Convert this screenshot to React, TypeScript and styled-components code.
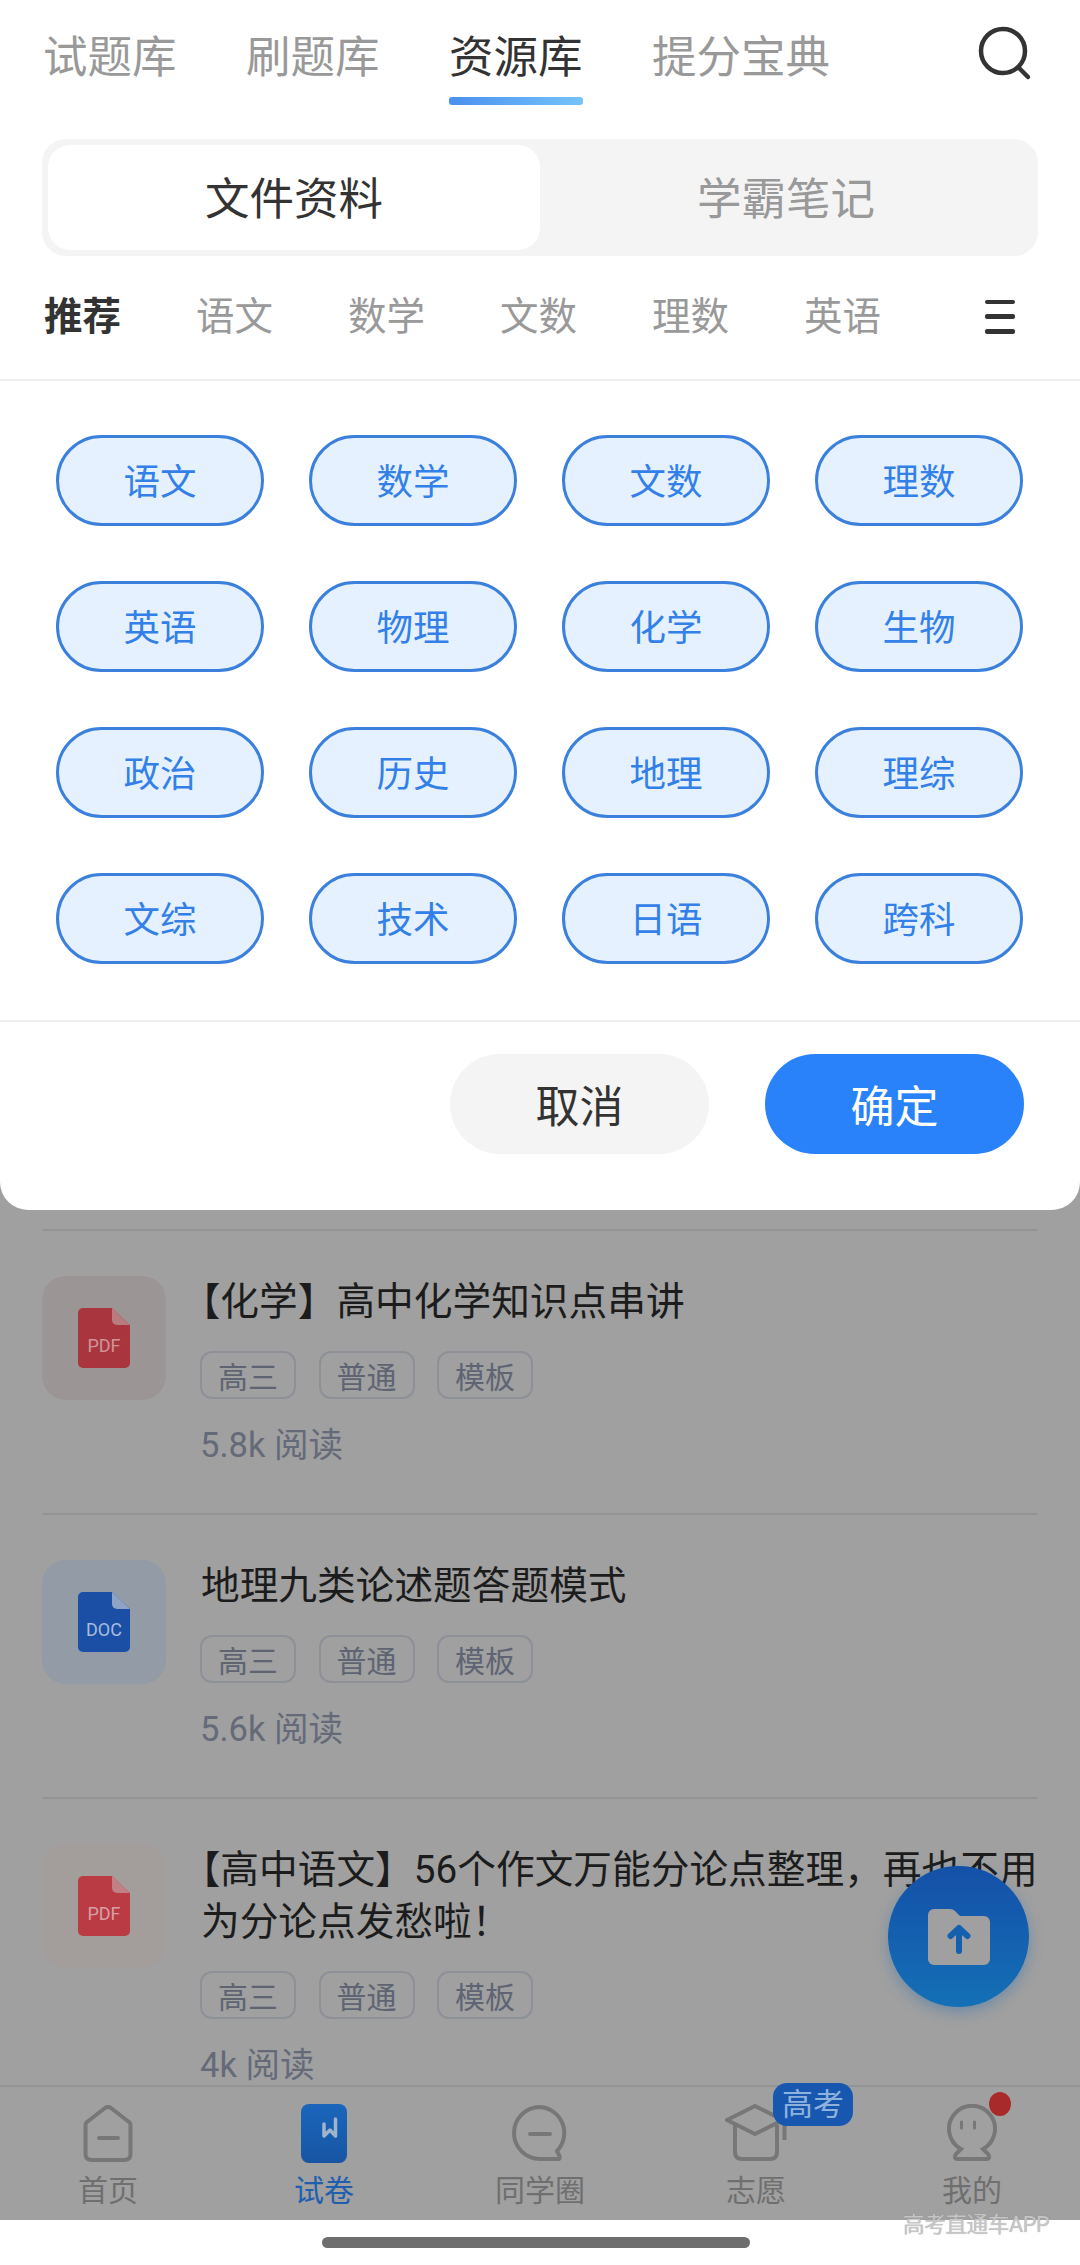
import React from "react";
import styled, { createGlobalStyle } from "styled-components";

const GlobalStyle = createGlobalStyle`
  html, body {
    margin: 0;
    padding: 0;
    background: #fff;
  }
  * {
    box-sizing: border-box;
  }
`;

const Page = styled.div`
  position: relative;
  width: 1080px;
  height: 2265px;
  overflow: hidden;
  display: flex;
  flex-direction: column;
  font-family: Roboto, "Noto Sans CJK SC", sans-serif;
`;

const Screen = styled.div`
  height: 2220px;
  display: flex;
  flex-direction: column;
  background: #a0a0a0;
`;

const Sheet = styled.div`
  height: 1210px;
  flex: none;
  background: #fff;
  border-radius: 0 0 28px 28px;
`;

const TopBar = styled.div`
  height: 139px;
  padding: 0 43px;
  display: flex;
  gap: 69.5px;
  position: relative;
`;

const TopTab = styled.div<{ $active?: boolean }>`
  position: relative;
  height: 105px;
  padding-top: 32px;
  font-size: 44.5px;
  line-height: 52px;
  white-space: nowrap;
  color: ${(p) => (p.$active ? "#333" : "#999")};

  &::after {
    content: "";
    display: ${(p) => (p.$active ? "block" : "none")};
    position: absolute;
    left: 0;
    right: 0;
    bottom: 0;
    height: 8px;
    border-radius: 3px;
    background: linear-gradient(90deg, #4a90ee, #74c3fb);
  }
`;

const SearchIcon = styled.svg`
  position: absolute;
  left: 976px;
  top: 25px;
  width: 56px;
  height: 56px;
`;

const Segment = styled.div`
  margin: 0 42px;
  height: 117px;
  padding: 6px;
  display: flex;
  border-radius: 24px;
  background: #f4f4f4;
`;

const SegmentItem = styled.div<{ $active?: boolean }>`
  width: 492px;
  padding-bottom: 5px;
  display: flex;
  align-items: center;
  justify-content: center;
  border-radius: 22px;
  font-size: 44.5px;
  color: ${(p) => (p.$active ? "#333" : "#999")};
  background: ${(p) => (p.$active ? "#fff" : "transparent")};
  & + & {
    flex: 1;
  }
`;

const SubjectRow = styled.div`
  height: 125px;
  padding: 0 0 2px 44px;
  display: flex;
  align-items: center;
  border-bottom: 2px solid #eeeeee;
`;

const SubjectTab = styled.div<{ $active?: boolean }>`
  width: 152px;
  font-size: 38.5px;
  line-height: 50px;
  font-weight: ${(p) => (p.$active ? 700 : 400)};
  color: ${(p) => (p.$active ? "#333" : "#999")};
`;

const MenuBars = styled.div`
  margin-left: 29px;
  width: 30px;
  height: 34px;
  display: flex;
  flex-direction: column;
  justify-content: space-between;

  span {
    height: 4.5px;
    border-radius: 2px;
    background: #333;
  }
`;

const PillGrid = styled.div`
  padding: 54px 57px 56px 56px;
  display: grid;
  grid-template-columns: repeat(4, 208px);
  justify-content: space-between;
  row-gap: 55px;
  border-bottom: 2px solid #eeeeee;
`;

const Pill = styled.div`
  height: 91px;
  padding-bottom: 2px;
  display: flex;
  align-items: center;
  justify-content: center;
  border: 3.5px solid #3a80dc;
  border-radius: 46px;
  background: #e6f1ff;
  font-size: 36.5px;
  color: #3381e8;
`;

const SheetFooter = styled.div`
  padding: 32px 56px 0 0;
  display: flex;
  justify-content: flex-end;
  gap: 56px;
`;

const FooterButton = styled.div<{ $primary?: boolean }>`
  width: 259px;
  height: 100px;
  display: flex;
  align-items: center;
  justify-content: center;
  border-radius: 50px;
  font-size: 44px;
  color: ${(p) => (p.$primary ? "#fff" : "#333")};
  background: ${(p) => (p.$primary ? "#2a82fb" : "#f4f4f4")};
`;

const Feed = styled.div`
  flex: 1;
  min-height: 0;
  overflow: hidden;
  padding: 19px 42px 0;
`;

const FeedItem = styled.div`
  padding: 45px 0 46px;
  display: flex;
  border-top: 2px solid #949494;
`;

const FileTile = styled.div<{ $bg: string }>`
  flex: none;
  width: 124px;
  height: 124px;
  margin-right: 35px;
  display: flex;
  align-items: center;
  justify-content: center;
  border-radius: 24px;
  background: ${(p) => p.$bg};
`;

const ItemBody = styled.div`
  flex: 1;
  min-width: 0;
  margin-right: -6px;
`;

const ItemTitle = styled.div`
  font-size: 38.7px;
  line-height: 52px;
  color: #1c1c1c;
  text-spacing-trim: trim-start;
`;

const TagRow = styled.div`
  margin-top: 23px;
  margin-left: -1px;
  display: flex;
  gap: 22.5px;
`;

const Tag = styled.div`
  width: 96px;
  height: 48px;
  display: flex;
  align-items: center;
  justify-content: center;
  border: 2.5px solid #8e9098;
  border-radius: 12px;
  font-size: 30px;
  color: #5f6472;
`;

const ReadCount = styled.div`
  margin-top: 24px;
  margin-left: -1px;
  font-size: 34.5px;
  line-height: 44px;
  color: #656a78;
`;

const TabBar = styled.div`
  flex: none;
  height: 135px;
  padding-top: 17px;
  display: grid;
  grid-template-columns: repeat(5, 216px);
  border-top: 2px solid #949494;
  background: #a0a0a0;
  position: relative;
`;

const TabItem = styled.div<{ $active?: boolean }>`
  position: relative;
  display: flex;
  flex-direction: column;
  align-items: center;
  font-size: 30px;
  line-height: 40px;
  color: ${(p) => (p.$active ? "#1f5fae" : "#6f6f6f")};

  svg {
    height: 60px;
    display: block;
    margin-bottom: 7px;
  }
`;

const Badge = styled.div`
  position: absolute;
  left: 125px;
  top: -21px;
  width: 80px;
  height: 43px;
  display: flex;
  align-items: center;
  justify-content: center;
  border-radius: 14px;
  background: #1757b0;
  font-size: 31px;
  line-height: 43px;
  color: #8fb2dc;
`;

const RedDot = styled.span`
  position: absolute;
  left: 125px;
  top: -12px;
  width: 22px;
  height: 24px;
  border-radius: 50%;
  background: #a82a2a;
`;

const Fab = styled.div`
  position: absolute;
  left: 888px;
  top: 1866px;
  width: 141px;
  height: 141px;
  display: flex;
  align-items: center;
  justify-content: center;
  border-radius: 50%;
  background: linear-gradient(180deg, #1450a8, #1470b6);
  box-shadow: 0 5px 14px rgba(20, 100, 180, 0.35);
`;

const HomeArea = styled.div`
  flex: 1;
  display: flex;
  justify-content: center;
  padding: 17px 8px 0 0;
  background: #fff;
`;

const HomeBar = styled.div`
  width: 428px;
  height: 11px;
  border-radius: 6px;
  background: #6e6e6e;
`;

const Watermark = styled.div`
  position: absolute;
  left: 903px;
  top: 2210px;
  font-size: 21.6px;
  line-height: 30px;
  letter-spacing: -0.4px;
  white-space: nowrap;
  color: #c6c6c6;
  text-shadow: 0 0 1px rgba(120, 120, 120, 0.6);
`;

const FileDoc = ({ kind, body, fold, label }: { kind: string; body: string; fold: string; label: string }) => (
  <svg width="52" height="60" viewBox="0 0 52 60">
    <path d="M5 0H34L52 17V55a5 5 0 0 1-5 5H5a5 5 0 0 1-5-5V5a5 5 0 0 1 5-5Z" fill={body} />
    <path d="M34 0L52 17H39a5 5 0 0 1-5-5Z" fill={fold} />
    <text x="26" y="44" textAnchor="middle" fontSize="18" fontFamily="Roboto" fill={label}>
      {kind}
    </text>
  </svg>
);

const HomeIcon = () => (
  <svg width="52" viewBox="0 0 52 60" fill="none" stroke="#777" strokeWidth="4">
    <path d="M3.5 21Q3.5 19 5 18L23 4Q26 2 29 4L47 18Q48.5 19 48.5 21V50Q48.5 56 42 56H10Q3.5 56 3.5 50Z" />
    <path d="M17 34H36" strokeLinecap="round" />
  </svg>
);

const PaperIcon = () => (
  <svg width="46" viewBox="0 0 46 60">
    <defs>
      <linearGradient id="paper" x1="0" y1="0" x2="0" y2="1">
        <stop offset="0" stopColor="#1a66bc" />
        <stop offset="1" stopColor="#1855a3" />
      </linearGradient>
    </defs>
    <rect width="46" height="59" rx="8" fill="url(#paper)" />
    <path
      d="M23 20V32L29 26L34.500 32V15"
      fill="none"
      stroke="#a0b4cc"
      strokeWidth="3.500"
      strokeLinecap="round"
      strokeLinejoin="round"
    />
  </svg>
);

const BubbleIcon = () => (
  <svg width="58" viewBox="0 0 58 60" fill="none" stroke="#777" strokeWidth="4">
    <path d="M29 3A26 26 0 1 0 29 55H47Q49.500 55 48.500 52L46 47A26 26 0 0 0 29 3Z" />
    <path d="M19 30H39" strokeLinecap="round" />
  </svg>
);

const HatIcon = () => (
  <svg width="62" viewBox="0 0 62 60" fill="none" stroke="#777" strokeWidth="4" strokeLinejoin="round">
    <path d="M30 2L2 16L30 30L58 16Z" />
    <path d="M10 21V48Q10 55 17 55H45Q52 55 52 48V21" />
    <path d="M59.500 16V36" />
  </svg>
);

const GhostIcon = () => (
  <svg width="50" viewBox="0 0 50 60" fill="none" stroke="#777" strokeWidth="4">
    <path d="M14 45A23 23 0 1 1 36 45L41 50Q44 55 39 55H11Q6 55 9 50Z" />
    <path d="M14.500 18V24M27.500 18V24" strokeWidth="3" strokeLinecap="round" />
  </svg>
);

const subjects = [
  "语文", "数学", "文数", "理数", "英语", "物理", "化学", "生物",
  "政治", "历史", "地理", "理综", "文综", "技术", "日语", "跨科",
];

const files = [
  { kind: "PDF", tile: "#9c9595", body: "#a9363f", fold: "#b87c80", label: "#cf9498", title: "【化学】高中化学知识点串讲", reads: "5.8k 阅读" },
  { kind: "DOC", tile: "#939ba6", body: "#1a4fa5", fold: "#8fa3c4", label: "#a8bcdc", title: "地理九类论述题答题模式", reads: "5.6k 阅读" },
  { kind: "PDF", tile: "#a39d9c", body: "#ba3b44", fold: "#c08084", label: "#d8a0a4", title: "【高中语文】56个作文万能分论点整理，再也不用为分论点发愁啦！", reads: "4k 阅读" },
];

const App = () => {
  return (
    <Page>
      <GlobalStyle />
      <Screen>
        <Sheet>
          <TopBar>
            <TopTab>试题库</TopTab>
            <TopTab>刷题库</TopTab>
            <TopTab $active>资源库</TopTab>
            <TopTab>提分宝典</TopTab>
            <SearchIcon viewBox="0 0 56 56" fill="none" stroke="#333" strokeWidth="4.500" strokeLinecap="round">
              <circle cx="27" cy="26" r="22" />
              <path d="M44 44L52 52" />
            </SearchIcon>
          </TopBar>
          <Segment>
            <SegmentItem $active>文件资料</SegmentItem>
            <SegmentItem>学霸笔记</SegmentItem>
          </Segment>
          <SubjectRow>
            <SubjectTab $active>推荐</SubjectTab>
            <SubjectTab>语文</SubjectTab>
            <SubjectTab>数学</SubjectTab>
            <SubjectTab>文数</SubjectTab>
            <SubjectTab>理数</SubjectTab>
            <SubjectTab>英语</SubjectTab>
            <MenuBars>
              <span />
              <span />
              <span />
            </MenuBars>
          </SubjectRow>
          <PillGrid>
            {subjects.map((s) => (
              <Pill key={s}>{s}</Pill>
            ))}
          </PillGrid>
          <SheetFooter>
            <FooterButton>取消</FooterButton>
            <FooterButton $primary>确定</FooterButton>
          </SheetFooter>
        </Sheet>
        <Feed>
          {files.map((f) => (
            <FeedItem key={f.title}>
              <FileTile $bg={f.tile}>
                <FileDoc kind={f.kind} body={f.body} fold={f.fold} label={f.label} />
              </FileTile>
              <ItemBody>
                <ItemTitle>{f.title}</ItemTitle>
                <TagRow>
                  <Tag>高三</Tag>
                  <Tag>普通</Tag>
                  <Tag>模板</Tag>
                </TagRow>
                <ReadCount>{f.reads}</ReadCount>
              </ItemBody>
            </FeedItem>
          ))}
        </Feed>
        <TabBar>
          <TabItem>
            <HomeIcon />
            首页
          </TabItem>
          <TabItem $active>
            <PaperIcon />
            试卷
          </TabItem>
          <TabItem>
            <BubbleIcon />
            同学圈
          </TabItem>
          <TabItem>
            <HatIcon />
            志愿
            <Badge>高考</Badge>
          </TabItem>
          <TabItem>
            <GhostIcon />
            我的
            <RedDot />
          </TabItem>
        </TabBar>
      </Screen>
      <HomeArea>
        <HomeBar />
      </HomeArea>
      <Fab>
        <svg width="62" height="56" viewBox="0 0 62 56">
          <path d="M6 0H22Q25 0 27 2L32 7H56a6 6 0 0 1 6 6V50a6 6 0 0 1-6 6H6a6 6 0 0 1-6-6V6a6 6 0 0 1 6-6Z" fill="#a0a0a0" />
          <path d="M31 42V19M22.500 27L31 19L39.500 27" fill="none" stroke="#1560ae" strokeWidth="6" strokeLinecap="round" strokeLinejoin="round" />
        </svg>
      </Fab>
      <Watermark>高考直通车APP</Watermark>
    </Page>
  );
};

export default App;
